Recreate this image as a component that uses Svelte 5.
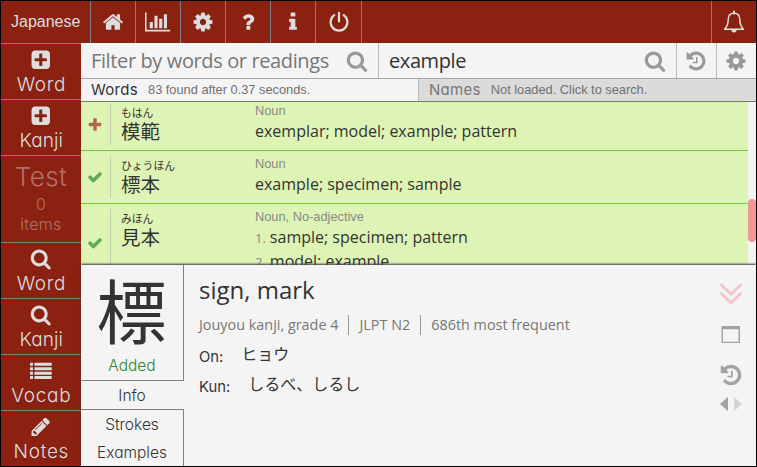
<script>
  const icons = {
    home: 'M1472 992v480q0 26-19 45t-45 19h-384v-384h-256v384h-384q-26 0-45-19t-19-45v-480q0-1 .5-3t.5-3l575-474 575 474q1 2 1 6zm223-69l-62 74q-8 9-21 11h-3q-13 0-21-7l-692-577-692 577q-12 8-24 7-13-2-21-11l-62-74q-8-10-7-23.5t11-21.5l719-599q32-26 76-26t76 26l244 204v-195q0-14 9-23t23-9h192q14 0 23 9t9 23v408l219 182q10 8 11 21.5t-7 23.5z',
    chart: 'M640 896v512h-256v-512h256zm384-512v1024h-256v-1024h256zm1024 1152v128h-2048v-1536h128v1408h1920zm-640-896v768h-256v-768h256zm384-384v1152h-256v-1152h256z',
    cog: 'M1152 896q0-106-75-181t-181-75-181 75-75 181 75 181 181 75 181-75 75-181zm512-109v222q0 12-8 23t-20 13l-185 28q-19 54-39 91 35 50 107 138 10 12 10 25t-9 23q-27 37-99 108t-94 71q-12 0-26-9l-138-108q-44 23-91 38-16 136-29 186-7 28-36 28h-222q-14 0-24.5-8.5t-11.5-21.5l-28-184q-49-16-90-37l-141 107q-10 9-25 9-14 0-25-11-126-114-165-168-7-10-7-23 0-12 8-23 15-21 51-66.5t54-70.5q-27-50-41-99l-183-27q-13-2-21-12.5t-8-23.5v-222q0-12 8-23t19-13l186-28q14-46 39-92-40-57-107-138-10-12-10-24 0-10 9-23 26-36 98.5-107.5t94.5-71.5q13 0 26 10l138 107q44-23 91-38 16-136 29-186 7-28 36-28h222q14 0 24.5 8.5t11.5 21.5l28 184q49 16 90 37l142-107q9-9 24-9 13 0 25 10 129 119 165 170 7 8 7 22 0 12-8 23-15 21-51 66.5t-54 70.5q26 50 41 98l183 28q13 2 21 12.5t8 23.5z',
    question: 'M1088 1256v240q0 16-12 28t-28 12h-240q-16 0-28-12t-12-28v-240q0-16 12-28t28-12h240q16 0 28 12t12 28zm316-600q0 54-15.5 101t-35 76.5-55 59.5-57.5 43.5-61 35.5q-41 23-68.5 65t-27.5 67q0 17-12 32.5t-28 15.5h-240q-15 0-25.5-18.5t-10.5-37.5v-45q0-83 65-156.5t143-108.5q59-27 84-56t25-76q0-42-46.5-74t-107.5-32q-65 0-108 29-35 25-107 115-13 16-31 16-12 0-25-8l-164-125q-13-10-15.5-25t5.5-28q160-266 464-266 80 0 161 31t146 83 106 127.5 41 158.5z',
    about: 'M1216 1344v128q0 26-19 45t-45 19h-512q-26 0-45-19t-19-45v-128q0-26 19-45t45-19h64v-384h-64q-26 0-45-19t-19-45v-128q0-26 19-45t45-19h384q26 0 45 19t19 45v576h64q26 0 45 19t19 45zm-128-1152v192q0 26-19 45t-45 19h-256q-26 0-45-19t-19-45v-192q0-26 19-45t45-19h256q26 0 45 19t19 45z',
    plusSquare: 'M1408 960v-128q0-26-19-45t-45-19h-320v-320q0-26-19-45t-45-19h-128q-26 0-45 19t-19 45v320h-320q-26 0-45 19t-19 45v128q0 26 19 45t45 19h320v320q0 26 19 45t45 19h128q26 0 45-19t19-45v-320h320q26 0 45-19t19-45zm256-544v960q0 119-84.5 203.5t-203.5 84.5h-960q-119 0-203.5-84.5t-84.5-203.5v-960q0-119 84.5-203.5t203.5-84.5h960q119 0 203.5 84.5t84.5 203.5z',
    search: 'M1216 832q0-185-131.5-316.5t-316.5-131.5-316.5 131.5-131.5 316.5 131.5 316.5 316.5 131.5 316.5-131.5 131.5-316.5zm512 832q0 52-38 90t-90 38q-54 0-90-38l-343-342q-179 124-399 124-143 0-273.5-55.5t-225-150-150-225-55.5-273.5 55.5-273.5 150-225 225-150 273.5-55.5 273.5 55.5 225 150 150 225 55.5 273.5q0 220-124 399l343 343q37 37 37 90z',
    history: 'M1664 896q0 156-61 298t-164 245-245 164-298 61q-172 0-327-72.5t-264-204.5q-7-10-6.5-22.5t8.5-20.5l137-138q10-9 25-9 16 2 23 12 73 95 179 147t225 52q104 0 198.5-40.5t163.5-109.5 109.5-163.5 40.5-198.5-40.5-198.5-109.5-163.5-163.5-109.5-198.5-40.5q-98 0-188 35.5t-160 101.5l137 138q31 30 14 69-17 40-59 40h-448q-26 0-45-19t-19-45v-448q0-42 40-59 39-17 69 14l130 129q107-101 244.5-156.5t284.5-55.5q156 0 298 61t245 164 164 245 61 298zm-640-288v448q0 14-9 23t-23 9h-320q-14 0-23-9t-9-23v-64q0-14 9-23t23-9h224v-352q0-14 9-23t23-9h64q14 0 23 9t9 23z',
    list: 'M0 150h250v250h-250zM370 150h1440v250h-1440zM0 520h250v250h-250zM370 520h1440v250h-1440zM0 890h250v250h-250zM370 890h1440v250h-1440zM0 1260h250v250h-250zM370 1260h1440v250h-1440z',
    pencil: 'M491 1536l91-91-235-235-91 91v107h128v128h107zm523-928q0-22-22-22-10 0-17 7l-542 542q-7 7-7 17 0 22 22 22 10 0 17-7l542-542q7-7 7-17zm-54-192l416 416-832 832h-416v-416zm683 96q0 53-37 90l-166 166-416-416 166-165q36-38 90-38 53 0 91 38l235 234q37 39 37 91z',
    check: 'M1671 566q0 40-28 68l-724 724-136 136q-28 28-68 28t-68-28l-136-136-362-362q-28-28-28-68t28-68l136-136q28-28 68-28t68 28l294 295 656-657q28-28 68-28t68 28l136 136q28 28 28 68z',
    plus: 'M1600 736v192q0 40-28 68t-68 28h-416v416q0 40-28 68t-68 28h-192q-40 0-68-28t-28-68v-416h-416q-40 0-68-28t-28-68v-192q0-40 28-68t68-28h416v-416q0-40 28-68t68-28h192q40 0 68 28t28 68v416h416q40 0 68 28t28 68z'
  };

  const menu = ['home', 'chart', 'cog', 'question', 'about', 'power'];
  const side = [
    { icon: 'plusSquare', label: 'Word' },
    { icon: 'plusSquare', label: 'Kanji' },
    { test: true },
    { icon: 'search', label: 'Word' },
    { icon: 'search', label: 'Kanji' },
    { icon: 'list', label: 'Vocab' },
    { icon: 'pencil', label: 'Notes' }
  ];
  const results = [
    { icon: 'plus', kana: 'もはん', word: '模範', pos: 'Noun', senses: ['exemplar; model; example; pattern'] },
    { icon: 'check', kana: 'ひょうほん', word: '標本', pos: 'Noun', senses: ['example; specimen; sample'] },
    { icon: 'check', kana: 'みほん', word: '見本', pos: 'Noun, No-adjective', senses: ['sample; specimen; pattern', 'model; example'] }
  ];
</script>

{#snippet icon(name, size)}
  <svg class="icon" width={name === 'chart' ? (size * 2048) / 1792 : size} height={size} viewBox="0 0 {name === 'chart' ? 2048 : 1792} 1792">
    <path d={icons[name]} />
  </svg>
{/snippet}

<div class="app">
  <header>
    <div class="lang">Japanese</div>
    {#each menu as m}
      <div class="item {m}">
        {#if m === 'power'}
          <svg width="22" height="22" viewBox="0 0 22 22" fill="none" stroke="#ddd" stroke-width="2.200" stroke-linecap="round">
            <path d="M6.300 4.200A8.400 8.400 0 1 0 15.700 4.200M11 1.800V10.500" />
          </svg>
        {:else}
          {@render icon(m, 22)}
        {/if}
      </div>
    {/each}
    <div class="bell">
      <svg width="22" height="24" viewBox="0 0 22 24" fill="none">
        <path d="M1.500 19.200C4.800 16 5.200 13 5.200 9.500C5.200 5.500 7.500 3.200 11 3.200S16.800 5.500 16.800 9.500C16.800 13 17.200 16 20.500 19.200Z" stroke="#ddd" stroke-width="1.500" stroke-linejoin="round" />
        <path d="M11 1.500V3.500" stroke="#ddd" stroke-width="2" stroke-linecap="round" />
        <path d="M8.300 19.500a2.700 3 0 0 0 5.400 0z" fill="#ddd" />
      </svg>
    </div>
  </header>

  <div class="body">
    <nav>
      {#each side as s}
        {#if s.test}
          <div class="cell test">
            <span class="big">Test</span>
            <span class="small">0</span>
            <span class="small">items</span>
          </div>
        {:else}
          <div class="cell">
            <span class="glyph {s.icon}">{@render icon(s.icon, 21.5)}</span>
            <span class="label {s.label}">{s.label}</span>
          </div>
        {/if}
      {/each}
    </nav>

    <main>
      <div class="filters">
        <div class="field left"><span class="hint">Filter by words or readings</span>{@render icon('search', 22)}</div>
        <div class="field right"><span>example</span>{@render icon('search', 22)}</div>
        <div class="tool">{@render icon('history', 22)}</div>
        <div class="tool last">{@render icon('cog', 22)}</div>
      </div>

      <div class="tabs">
        <div class="tab words"><b>Words</b><span>83 found after 0.37 seconds.</span></div>
        <div class="tab names"><b>Names</b><span>Not loaded. Click to search.</span></div>
      </div>

      <div class="results">
        <div class="rows">
          {#each results as r}
            <div class="row" class:tall={r.senses.length > 1}>
              <div class="mark {r.icon}">{@render icon(r.icon, 16)}</div>
              <div class="jp"><span class="kana">{r.kana}</span><span class="word">{r.word}</span></div>
              <div class="meaning">
                <span class="pos">{r.pos}</span>
                {#each r.senses as s, i}
                  <span class="sense">{#if r.senses.length > 1}<i>{i + 1}.</i>{/if}{s}</span>
                {/each}
              </div>
            </div>
          {/each}
        </div>
        <div class="track"><div class="thumb"></div></div>
      </div>

      <section class="detail">
        <aside>
          <div class="head">
            <div class="kanji">標</div>
            <div class="added">Added</div>
          </div>
          <div class="page current">Info</div>
          <div class="page second">Strokes</div>
          <div class="page">Examples</div>
        </aside>
        <div class="info">
          <h1>sign, mark</h1>
          <div class="facts"><span>Jouyou kanji, grade 4</span><span>JLPT N2</span><span>686th most frequent</span></div>
          <div class="reading on"><em>On:</em><span>ヒョウ</span></div>
          <div class="reading kun"><em>Kun:</em><span>しるべ、しるし</span></div>
        </div>
        <div class="side-tools">
          <svg width="24" height="24" viewBox="0 0 24 24" fill="none" stroke="#f4c3c5" stroke-width="2.600" stroke-linecap="round" stroke-linejoin="round">
            <path d="M2.300 2.800L12 12.300L21.700 2.800M2.300 11.500L12 21L21.700 11.500" />
          </svg>
          <svg class="win" width="20" height="18" viewBox="0 0 20 18">
            <path d="M.5 0h18.500v17H.5zM2 3.200v12.500h15.500V3.200z" fill="#a3a3a3" fill-rule="evenodd" />
          </svg>
          <span class="hist">{@render icon('history', 24)}</span>
          <svg class="arrows" width="22" height="14" viewBox="0 0 22 14">
            <path d="M8 0V14L0 7z" fill="#a3a3a3" /><path d="M14 0V14L22 7z" fill="#d4d4d4" />
          </svg>
        </div>
      </section>
    </main>
  </div>
</div>

<style>
  .app {
    box-sizing: border-box;
    width: 757px;
    height: 467px;
    border: 1px solid #000;
    display: flex;
    flex-direction: column;
    overflow: hidden;
    background: #f4f4f4;
    color: #333;
    font-family: 'Open Sans', 'Noto Sans CJK JP', sans-serif;
  }
  .app * { box-sizing: border-box; }
  .icon { display: block; fill: currentColor; overflow: visible; flex: none; }

  header { display: flex; height: 42px; background: #8b2211; color: #ddd; flex: none; }
  .lang { width: 90px; border-right: 1px solid #808080; font: 16px/41px 'Liberation Sans', sans-serif; padding-left: 10px; }
  .item { width: 45px; border-right: 1px solid #808080; display: flex; align-items: center; justify-content: center; }
  .item.power { width: 46px; }
  .bell { margin-left: auto; width: 45px; border-left: 1px solid #808080; display: flex; align-items: center; justify-content: center; }

  .body { display: flex; flex: 1; min-height: 0; }
  nav { width: 80px; background: #8b2211; color: #ddd; flex: none; font-family: Inter, sans-serif; font-weight: 350; font-feature-settings: 'cv11' 1; }
  .cell { height: 56px; border-top: 1px solid #808080; display: flex; flex-direction: column; align-items: center; }
  .glyph { padding-top: 5px; height: 27px; }
  .glyph.list { padding-top: 6px; }
  .label { font-size: 19px; line-height: 26px; margin-top: 1px; letter-spacing: 0.7px; margin-right: -0.7px; }
  .label.Kanji { letter-spacing: 0.1px; }
  .test { height: 87px; color: #b2706a; }
  .big { font-size: 26px; line-height: 32px; margin-top: 5px; letter-spacing: 0.4px; }
  .small { font-size: 16px; line-height: 20px; letter-spacing: 0.3px; }
  .big + .small { margin-top: 1px; }

  main { flex: 1; min-width: 0; display: flex; flex-direction: column; }
  .filters { display: flex; height: 36px; border-bottom: 1px solid #a6a6a6; font-size: 20px; line-height: 35px; flex: none; }
  .field { display: flex; align-items: center; justify-content: space-between; padding: 0 10px; white-space: nowrap; letter-spacing: -0.4px; }
  .filters .icon, .tool { color: #999; }
  .left { width: 298px; border-right: 1px solid #bbb; }
  .right { flex: 1; }
  .hint { color: #777; letter-spacing: -0.38px; }
  .tool { width: 40px; border-left: 1px solid #bbb; display: flex; align-items: center; justify-content: center; padding: 0 1px 0 0; }

  .tabs { display: flex; height: 23px; border-bottom: 1px solid #6f8058; flex: none; }
  .tab { display: flex; padding-left: 10px; align-items: center; line-height: 22px; white-space: nowrap; }
  .tab b { font: 15px/22px Inter, sans-serif; font-feature-settings: 'cv11' 1; letter-spacing: 0.3px; }
  .tab span { font: 12.800px/22px 'Liberation Sans', sans-serif; color: #707070; margin-left: 10px; }
  .words { width: 337px; }
  .names { flex: 1; background: #dbdbdb; border-left: 1px solid #bbb; }
  .names b { color: #777; }

  .results { display: flex; height: 163px; overflow: hidden; flex: none; }
  .rows { flex: 1; background: #def4b4; height: 163px; overflow: hidden; }
  .row { display: flex; height: 53px; border-bottom: 1px solid #71cf2e; }
  .row:first-child { height: 49px; }
  .row:first-child .meaning, .row:first-child .mark { margin-top: -4px; }
  .row.tall { height: 80px; }
  .mark { width: 29px; padding: 0 0 1px 6px; display: flex; align-items: center; height: 52px; }
  .tall .mark { height: 79px; }
  .row .mark.plus { color: #b1664a; padding-bottom: 0; margin-top: -3px; }
  .mark.check { color: #63a955; }
  .jp { width: 145px; border-left: 1px solid #c2ceab; padding-left: 10px; margin: 5px 0; display: flex; flex-direction: column; font-family: 'Noto Sans CJK JP', sans-serif; }
  .tall .jp { margin-bottom: 0; }
  .kana { font-size: 10.800px; line-height: 18px; }
  .row:first-child .jp { margin-top: 1px; }
  .word { font-size: 19.500px; line-height: 20px; }
  .meaning { display: flex; flex-direction: column; white-space: nowrap; padding-top: 5px; }
  .pos { font: 12.800px/16px 'Liberation Sans', sans-serif; color: #888; }
  .sense { font-size: 16px; line-height: 24px; height: 24px; }
  .sense i { font: 13px/20px 'Open Sans', sans-serif; color: #888; margin-right: 4px; }
  .track { width: 8px; background: #f4f4f4; padding-top: 97px; }
  .thumb { height: 43px; border-radius: 4px; background: #f39696; }

  .detail { flex: 1; min-height: 0; display: flex; background: #f4f4f4; position: relative; box-shadow: 0 -1px 2px #333; }
  aside { width: 103px; flex: none; text-align: center; font: 15.500px/29px Inter, sans-serif; font-weight: 350; font-feature-settings: 'cv11' 1; }
  .head { height: 116px; border-right: 1px solid #808080; border-bottom: 1px solid #808080; }
  .kanji { font: 70px/87px 'Noto Sans CJK JP', sans-serif; height: 87px; padding-right: 1px; }
  .added { color: #2d832d; line-height: 28px; }
  .page { height: 29px; border-right: 1px solid #808080; line-height: 30px; }
  .page.current { height: 28px; border-right-color: transparent; line-height: 29px; }
  .page.second { border-top: 1px solid #808080; line-height: 29px; }
  .info { flex: 1; padding: 9px 0 0 15px; }
  h1 { margin: 0; font-weight: 400; font-size: 24px; line-height: 32px; }
  .facts { display: flex; font-size: 14.400px; line-height: 20px; color: #777; margin-top: 9px; }
  .facts span + span { border-left: 1px solid #999; margin-left: 10px; padding-left: 10px; }
  .reading { display: flex; height: 30px; }
  .on { margin-top: 4px; }
  .reading em { font: 14.800px/36px Inter, sans-serif; }
  .reading span { font-family: 'Noto Sans CJK JP', sans-serif; font-size: 16px; line-height: 29px; margin-left: 18px; }
  .side-tools { width: 40px; flex: none; display: flex; flex-direction: column; align-items: flex-start; padding: 17px 0 0 3px; color: #a3a3a3; }
  .win { margin: 20px 0 0 2px; }
  .hist { margin-top: 19px; }
  .arrows { margin: 10px 0 0 1px; }
</style>
